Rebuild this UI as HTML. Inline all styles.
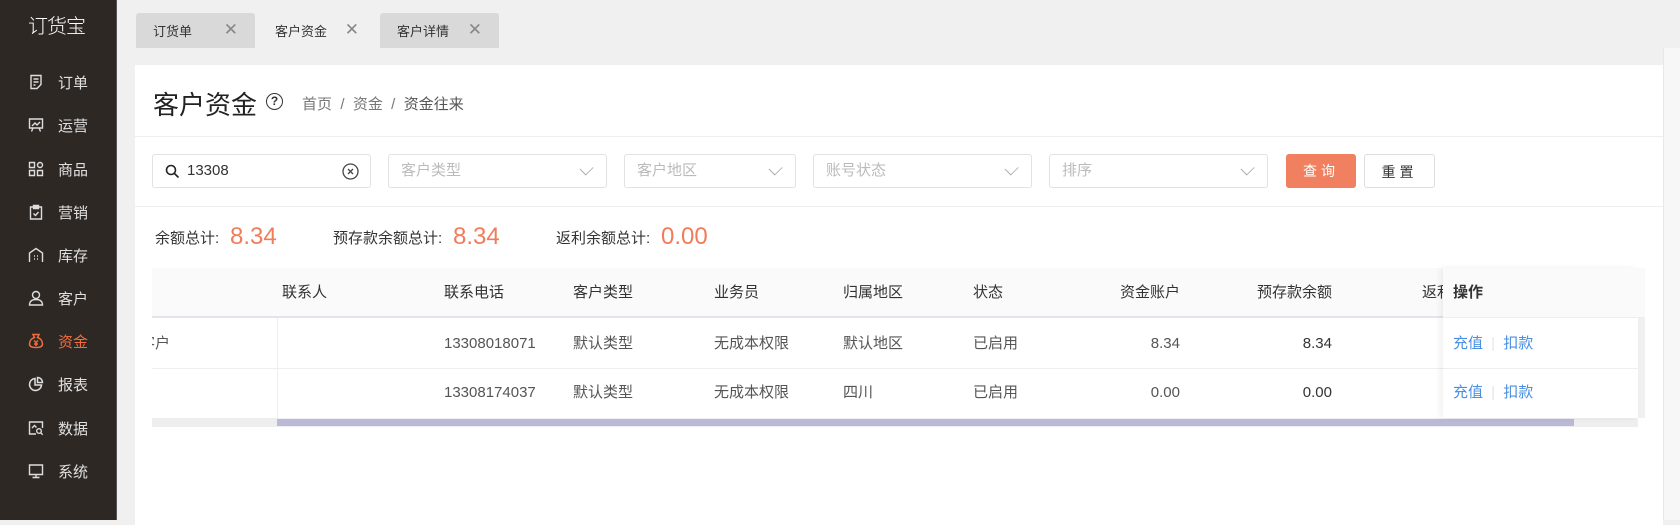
<!DOCTYPE html>
<html><head><meta charset="utf-8"><style>
*{box-sizing:border-box;margin:0;padding:0}
body{width:1680px;height:520px;overflow:hidden;background:#f0f0f0;font-family:"Liberation Sans","Noto Sans CJK SC",sans-serif;color:#333;position:relative}
.abs{position:absolute}
.side{left:0;top:0;width:117px;height:520px;background:#2e2825;border-right:1px solid #555}
.logo{left:28px;top:10px;color:#fff;font-size:20px;font-weight:300;letter-spacing:-1px}
.nav{left:28px;width:90px;height:24px;color:#e0e0e0;font-size:15px;display:flex;align-items:center}
.nav svg{width:16px;height:16px;margin-right:14px}
.nav.on{color:#f26d3d}
.tab{top:13px;height:35px;background:#d9d9d9;border-radius:3px 3px 0 0;font-size:13px;color:#333;display:flex;align-items:center;padding-left:17px}
.tab .x{position:absolute;right:17px;top:7px;font-size:17px;color:#888;font-weight:300}
.panel{left:135px;top:65px;width:1528px;height:460px;background:#fff}
.hr{height:1px;background:#eee}
.inp{top:154px;height:34px;border:1px solid #e2e2e2;border-radius:3px;font-size:15px;color:#bbb;padding-left:12px;line-height:32px}
.inp .v{position:absolute;right:14px;top:8px;width:11px;height:11px;border-right:1.3px solid #aaa;border-bottom:1.3px solid #aaa;transform:rotate(45deg) scaleX(.8);}
.btn{top:154px;height:34px;border-radius:3px;font-size:14px;line-height:34px;text-align:center;letter-spacing:4px}
.lab{font-size:15px;color:#333;top:229px;line-height:20px}
.val{font-size:24px;color:#f07c5a;top:222px;line-height:30px}
.th{top:268px;left:152px;width:1493px;height:50px;background:#fafafa;border-bottom:2px solid #e4e4ea}
.c{font-size:15px;color:#555;white-space:nowrap;line-height:20px}
.h{font-size:15px;color:#333;top:283px;line-height:20px}
.row{left:152px;width:1493px;height:1px;background:#eee}
</style></head><body>
<div class="abs side"></div>
<div class="abs logo">订货宝</div>
<div class="abs nav" style="top:70px"><svg viewBox="0 0 16 16" fill="none" stroke="#ddd" stroke-width="1.4"><path d="M3 1.5h10v9l-4 4H3z M5.5 5h5 M5.5 8h5 M5.5 11h2"/></svg>订单</div>
<div class="abs nav" style="top:113px"><svg viewBox="0 0 16 16" fill="none" stroke="#ddd" stroke-width="1.4"><path d="M1.5 2h13v9h-13z M4 9l3-3 2 2 3-3 M5 11l-1.5 3.5 M11 11l1.5 3.5"/></svg>运营</div>
<div class="abs nav" style="top:157px"><svg viewBox="0 0 16 16" fill="none" stroke="#ddd" stroke-width="1.4"><path d="M1.5 1.5h5v5h-5z M1.5 9.5h5v5h-5z M9.5 9.5h5v5h-5z"/><circle cx="12" cy="4" r="2.5"/></svg>商品</div>
<div class="abs nav" style="top:200px"><svg viewBox="0 0 16 16" fill="none" stroke="#ddd" stroke-width="1.4"><path d="M2.5 3h11v12h-11z M5.5 1.5h5v3h-5z M5.5 9.5l2 2 3-3.5"/></svg>营销</div>
<div class="abs nav" style="top:243px"><svg viewBox="0 0 16 16" fill="none" stroke="#ddd" stroke-width="1.4"><path d="M1.5 15V6L8 1.5 14.5 6v9 M6 9h1 M9 9h1 M6 12h1 M9 12h1"/></svg>库存</div>
<div class="abs nav" style="top:286px"><svg viewBox="0 0 16 16" fill="none" stroke="#ddd" stroke-width="1.4"><circle cx="8" cy="5" r="3.5"/><path d="M1.5 15c0-4 3-5.5 6.5-5.5s6.5 1.5 6.5 5.5z"/></svg>客户</div>
<div class="abs nav on" style="top:329px"><svg viewBox="0 0 16 16" fill="none" stroke="#f26d3d" stroke-width="1.5"><path d="M5 1.5h6l-1.5 3c3 1 5 3.5 5 6.5 0 2.5-2 3.5-6.5 3.5S1.5 13.5 1.5 11c0-3 2-5.5 5-6.5z M6 7.5l2 2 2-2 M8 9.5v3.5 M6 11h4"/></svg>资金</div>
<div class="abs nav" style="top:372px"><svg viewBox="0 0 16 16" fill="none" stroke="#ddd" stroke-width="1.5"><path d="M7 2.5a6 6 0 1 0 6.5 6.5H7z M9.5 1.5v5h5a5 5 0 0 0-5-5z"/></svg>报表</div>
<div class="abs nav" style="top:416px"><svg viewBox="0 0 16 16" fill="none" stroke="#ddd" stroke-width="1.4"><path d="M8 14H1.5V2h13v6 M4 8l2.5-2.5 2 2"/><circle cx="11" cy="11" r="2.3"/><path d="M12.7 12.7l2 2"/></svg>数据</div>
<div class="abs nav" style="top:459px"><svg viewBox="0 0 16 16" fill="none" stroke="#ddd" stroke-width="1.4"><path d="M1.5 2h13v9.5h-13z M8 11.5v3 M4.5 14.5h7"/></svg>系统</div>

<div class="abs tab" style="left:136px;width:119px">订货单<span class="x">✕</span></div>
<div class="abs tab" style="left:258px;width:118px;background:#f0f0f0">客户资金<span class="x">✕</span></div>
<div class="abs tab" style="left:380px;width:119px">客户详情<span class="x">✕</span></div>

<div class="abs panel"></div>
<div class="abs" style="left:153px;top:85px;font-size:26px;color:#222">客户资金</div>
<div class="abs" style="left:266px;top:93px;width:17px;height:17px;border:1.6px solid #333;border-radius:50%;font-size:12px;text-align:center;line-height:14px;font-weight:bold">?</div>
<div class="abs" style="left:302px;top:93px;font-size:15px;color:#777">首页 &nbsp;/&nbsp; 资金 &nbsp;/&nbsp; <span style="color:#555">资金往来</span></div>
<div class="abs hr" style="left:135px;top:136px;width:1528px"></div>

<div class="abs inp" style="left:152px;width:219px;color:#333;padding-left:34px">13308
<svg class="abs" style="left:12px;top:9px" width="15" height="15" viewBox="0 0 15 15" fill="none" stroke="#222" stroke-width="1.6"><circle cx="6" cy="6" r="4.5"/><path d="M9.5 9.5l4 4"/></svg>
<svg class="abs" style="right:11px;top:8px" width="17" height="17" viewBox="0 0 17 17" fill="none" stroke="#444" stroke-width="1.3"><circle cx="8.5" cy="8.5" r="7.5"/><path d="M6 6l5 5M11 6l-5 5"/></svg></div>
<div class="abs inp" style="left:388px;width:219px">客户类型<span class="v"></span></div>
<div class="abs inp" style="left:624px;width:172px">客户地区<span class="v"></span></div>
<div class="abs inp" style="left:813px;width:219px">账号状态<span class="v"></span></div>
<div class="abs inp" style="left:1049px;width:219px">排序<span class="v"></span></div>
<div class="abs btn" style="left:1286px;width:70px;background:#f0805f;color:#fff">查询</div>
<div class="abs btn" style="left:1364px;width:71px;border:1px solid #ddd;color:#333">重置</div>
<div class="abs hr" style="left:135px;top:206px;width:1528px"></div>

<div class="abs lab" style="left:155px">余额总计:</div><div class="abs val" style="left:230px">8.34</div>
<div class="abs lab" style="left:333px">预存款余额总计:</div><div class="abs val" style="left:453px">8.34</div>
<div class="abs lab" style="left:556px">返利余额总计:</div><div class="abs val" style="left:661px">0.00</div>

<div class="abs th"></div>
<div class="abs h" style="left:282px">联系人</div>
<div class="abs h" style="left:444px">联系电话</div>
<div class="abs h" style="left:573px">客户类型</div>
<div class="abs h" style="left:714px">业务员</div>
<div class="abs h" style="left:843px">归属地区</div>
<div class="abs h" style="left:973px">状态</div>
<div class="abs h" style="left:1120px">资金账户</div>
<div class="abs h" style="left:1257px">预存款余额</div>
<div class="abs h" style="left:1422px">返利</div>
<div class="abs" style="left:277px;top:318px;width:1px;height:100px;background:#eee"></div>
<div class="abs row" style="top:368px"></div>
<div class="abs" style="left:152px;top:334px;width:18px;overflow:hidden;height:20px"><span class="c" style="position:absolute;right:0">客户</span></div>
<div class="abs c" style="left:444px;top:334px">13308018071</div>
<div class="abs c" style="left:573px;top:334px">默认类型</div>
<div class="abs c" style="left:714px;top:334px">无成本权限</div>
<div class="abs c" style="left:843px;top:334px">默认地区</div>
<div class="abs c" style="left:973px;top:334px">已启用</div>
<div class="abs c" style="left:1100px;top:334px;width:80px;text-align:right">8.34</div>
<div class="abs c" style="left:1252px;top:334px;width:80px;text-align:right;color:#333">8.34</div>
<div class="abs c" style="left:444px;top:383px">13308174037</div>
<div class="abs c" style="left:573px;top:383px">默认类型</div>
<div class="abs c" style="left:714px;top:383px">无成本权限</div>
<div class="abs c" style="left:843px;top:383px">四川</div>
<div class="abs c" style="left:973px;top:383px">已启用</div>
<div class="abs c" style="left:1100px;top:383px;width:80px;text-align:right">0.00</div>
<div class="abs c" style="left:1252px;top:383px;width:80px;text-align:right;color:#333">0.00</div>

<div class="abs" style="left:152px;top:418px;width:1486px;height:9px;background:#eee"></div>
<div class="abs" style="left:277px;top:419px;width:1297px;height:7px;background:#babad8"></div>

<div class="abs" style="left:1443px;top:268px;width:195px;height:150px;background:#fff;box-shadow:-3px 0 6px rgba(0,0,0,.06)"></div>
<div class="abs" style="left:1443px;top:268px;width:202px;height:50px;background:#fafafa;border-bottom:1px solid #eee"></div>
<div class="abs h" style="left:1453px;font-weight:bold">操作</div>
<div class="abs" style="left:1443px;top:368px;width:195px;height:1px;background:#eee"></div>
<div class="abs c" style="left:1453px;top:334px;color:#4a8fe0">充值 <span style="color:#e5e5e5;margin:0 4px">|</span> 扣款</div>
<div class="abs c" style="left:1453px;top:383px;color:#4a8fe0">充值 <span style="color:#e5e5e5;margin:0 4px">|</span> 扣款</div>
<div class="abs" style="left:1638px;top:318px;width:7px;height:100px;background:#f0f0f0"></div>

<div class="abs" style="left:1663px;top:48px;width:17px;height:472px;background:#f7f7f7;border-left:1px solid #e8e8e8"></div>
</body></html>
